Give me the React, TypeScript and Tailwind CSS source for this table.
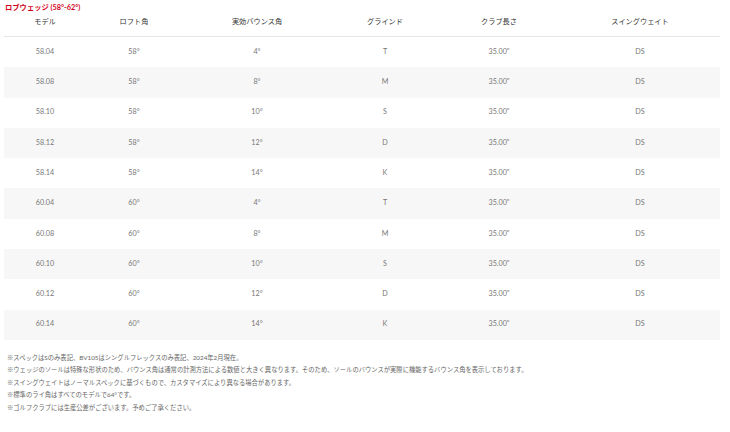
const rows = [
  ['58.04', '58°', '4°', 'T'],
  ['58.08', '58°', '8°', 'M'],
  ['58.10', '58°', '10°', 'S'],
  ['58.12', '58°', '12°', 'D'],
  ['58.14', '58°', '14°', 'K'],
  ['60.04', '60°', '4°', 'T'],
  ['60.08', '60°', '8°', 'M'],
  ['60.10', '60°', '10°', 'S'],
  ['60.12', '60°', '12°', 'D'],
  ['60.14', '60°', '14°', 'K'],
]

const headers = ['モデル', 'ロフト角', '実効バウンス角', 'グラインド', 'クラブ長さ', 'スイングウェイト']

const notes = [
  '※スペックはSのみ表記、BV105はシングルフレックスのみ表記、2024年2月現在。',
  '※ウェッジのソールは特殊な形状のため、バウンス角は通常の計測方法による数値と大きく異なります。そのため、ソールのバウンスが実際に機能するバウンス角を表示しております。',
  '※スイングウェイトはノーマルスペックに基づくもので、カスタマイズにより異なる場合があります。',
  '※標準のライ角はすべてのモデルで64°です。',
  '※ゴルフクラブには生産公差がございます。予めご了承ください。',
]

const grid = 'grid grid-cols-[82px_96px_150px_106px_122px_160px] text-center'

export default function App() {
  return (
    <div
      className="w-[730px] h-[432px] bg-white px-[4px] overflow-hidden"
      style={{ fontFamily: 'Lato, "Noto Sans CJK JP", sans-serif' }}
    >
      <div className="h-[14px] leading-[16px] text-[7.3px] font-bold text-[#d0021b] pl-[1px]">
        ロブウェッジ (58°-62°)
      </div>

      <div className="w-[716px]">
        <div className={`${grid} h-[23px] pt-[3px] text-[7.2px] leading-[9px] text-[#333] border-b border-[#e6e6e6]`}>
          {headers.map((h) => (
            <div key={h}>{h}</div>
          ))}
        </div>

        {rows.map((r, i) => (
          <div
            key={r[0]}
            className={`${grid} h-[30.3px] items-center text-[7.2px] text-[#777] ${i % 2 === 1 ? 'bg-[#f7f7f7]' : ''}`}
          >
            <div>{r[0]}</div>
            <div>{r[1]}</div>
            <div>{r[2]}</div>
            <div>{r[3]}</div>
            <div>35.00"</div>
            <div>DS</div>
          </div>
        ))}
      </div>

      <div className="mt-[12px] pl-[3px] text-[6.3px] leading-[12.5px] text-[#666]">
        {notes.map((n) => (
          <div key={n}>{n}</div>
        ))}
      </div>
    </div>
  )
}
